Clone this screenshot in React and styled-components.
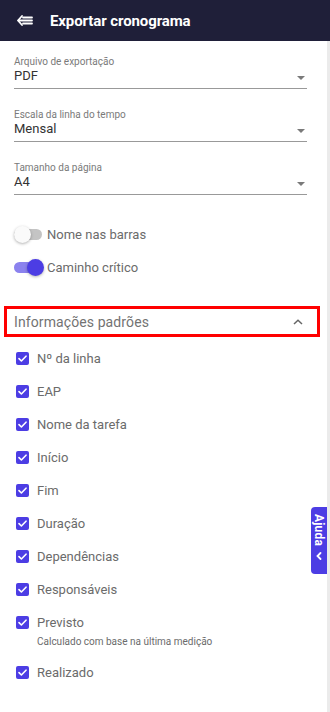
import React from 'react';
import styled, { createGlobalStyle } from 'styled-components';

const GlobalStyle = createGlobalStyle`
  * { box-sizing: border-box; }
  body {
    margin: 0;
    font-family: Roboto, "Noto Sans", sans-serif;
    background: #fff;
  }
`;

const Page = styled.div`
  width: 330px;
  height: 712px;
  display: flex;
  flex-direction: column;
  position: relative;
  overflow: hidden;
`;

const Header = styled.header`
  height: 41px;
  background: #1f1f39;
  display: flex;
  align-items: center;
  padding-left: 17px;
  gap: 17px;
  flex-shrink: 0;
`;

const Title = styled.h1`
  margin: 0;
  color: #fff;
  font-size: 15px;
  font-weight: 700;
  letter-spacing: -0.1px;
`;

const Body = styled.div`
  flex: 1;
  display: flex;
`;

const Content = styled.div`
  flex: 1;
  padding: 15px 0 0 0;
`;

const ScrollTrack = styled.div`
  width: 3px;
  background: #ebebeb;
`;

const Fields = styled.div`
  display: flex;
  flex-direction: column;
  gap: 20px;
  padding: 0 20px 0 14px;
`;

const Field = styled.div`
  display: flex;
  flex-direction: column;
  border-bottom: 1px solid #999;
  padding-bottom: 4px;
`;

const FieldLabel = styled.span`
  font-size: 10px;
  line-height: 12px;
  color: #7a7a7a;
`;

const FieldValue = styled.div`
  display: flex;
  align-items: center;
  justify-content: space-between;
  font-size: 13px;
  line-height: 16px;
  color: #333;
  padding-right: 2px;
`;

const Caret = styled.span`
  width: 0;
  height: 0;
  border-left: 4px solid transparent;
  border-right: 4px solid transparent;
  border-top: 4px solid #7a7a7a;
  margin-top: 3px;
`;

const Switches = styled.div`
  margin-top: 27px;
  padding-left: 14px;
  display: flex;
  flex-direction: column;
  gap: 9px;
`;

const SwitchRow = styled.label`
  height: 24px;
  display: flex;
  align-items: center;
  gap: 5px;
  font-size: 13px;
  color: #6b6b6b;
`;

const Track = styled.span`
  position: relative;
  width: 28px;
  height: 11px;
  border-radius: 6px;
  background: ${p => (p.$on ? '#8b82ee' : '#c4c4c4')};
`;

const Thumb = styled.span`
  position: absolute;
  top: -3px;
  left: ${p => (p.$on ? '13px' : '0px')};
  width: 17px;
  height: 17px;
  border-radius: 50%;
  background: ${p => (p.$on ? '#4c3de4' : '#fafafa')};
  box-shadow: 0 1px 3px rgba(0, 0, 0, 0.3);
`;

const Section = styled.div`
  margin: 27px 7px 0 4px;
  height: 31px;
  border: 3px solid #ff0000;
  display: flex;
  align-items: center;
  justify-content: space-between;
  padding: 0 14px 0 7px;
  font-size: 14px;
  color: #737373;
  letter-spacing: 0.1px;
`;

const Checks = styled.div`
  margin-top: 5px;
  padding-left: 16px;
  display: flex;
  flex-direction: column;
`;

const CheckRow = styled.div`
  height: ${p => (p.$tall ? '50px' : '33px')};
  display: flex;
  align-items: ${p => (p.$tall ? 'flex-start' : 'center')};
  padding-top: ${p => (p.$tall ? '9px' : '0')};
  gap: 8px;
`;

const Box = styled.span`
  width: 13px;
  height: 13px;
  border-radius: 2px;
  background: #4c3de4;
  display: flex;
  align-items: center;
  justify-content: center;
  flex-shrink: 0;
  margin-top: ${p => (p.$tall ? '1px' : '0')};
`;

const CheckText = styled.div`
  display: flex;
  flex-direction: column;
`;

const CheckLabel = styled.span`
  font-size: 13px;
  line-height: 16px;
  color: #6b6b6b;
`;

const Hint = styled.span`
  font-size: 10px;
  line-height: 12px;
  margin-top: 5px;
  color: #6b6b6b;
`;

const HelpTab = styled.div`
  position: absolute;
  right: 3px;
  top: 507px;
  width: 16px;
  height: 67px;
  background: #4c3de4;
  border-radius: 4px 0 0 4px;
  display: flex;
  flex-direction: column;
  align-items: center;
  padding-top: 7px;
  gap: 6px;
  color: #fff;
`;

const HelpText = styled.span`
  writing-mode: vertical-rl;
  font-size: 12px;
  font-weight: 700;
  letter-spacing: 0.2px;
`;

const BackIcon = () => (
  <svg width="16" height="11" viewBox="0 0 16 11" fill="none" stroke="#fff" strokeWidth="1.8" strokeLinecap="round" strokeLinejoin="round">
    <path d="M5 1 L1 5.5 L5 10" />
    <path d="M1.5 5.5 H15" />
    <path d="M6 2.5 H15" />
    <path d="M6 8.5 H15" />
  </svg>
);

const Check = () => (
  <svg width="9" height="7" viewBox="0 0 9 7" fill="none" stroke="#fff" strokeWidth="1.6" strokeLinecap="round" strokeLinejoin="round">
    <path d="M1 3.6 L3.4 6 L8 1.2" />
  </svg>
);

const ChevronUp = () => (
  <svg width="10" height="6" viewBox="0 0 10 6" fill="none" stroke="#666" strokeWidth="1.5">
    <path d="M1 5 L5 1.2 L9 5" />
  </svg>
);

const ChevronLeft = () => (
  <svg width="6" height="8" viewBox="0 0 6 8" fill="none" stroke="#fff" strokeWidth="1.8" strokeLinecap="round">
    <path d="M4.5 1 L1.5 4 L4.5 7" />
  </svg>
);

const fields = [
  ['Arquivo de exportação', 'PDF'],
  ['Escala da linha do tempo', 'Mensal'],
  ['Tamanho da página', 'A4'],
];

const items = [
  'Nº da linha',
  'EAP',
  'Nome da tarefa',
  'Início',
  'Fim',
  'Duração',
  'Dependências',
  'Responsáveis',
];

export default function App() {
  return (
    <Page>
      <GlobalStyle />
      <Header>
        <BackIcon />
        <Title>Exportar cronograma</Title>
      </Header>
      <Body>
        <Content>
          <Fields>
            {fields.map(([label, value]) => (
              <Field key={label}>
                <FieldLabel>{label}</FieldLabel>
                <FieldValue>
                  {value}
                  <Caret />
                </FieldValue>
              </Field>
            ))}
          </Fields>

          <Switches>
            <SwitchRow>
              <Track><Thumb /></Track>
              Nome nas barras
            </SwitchRow>
            <SwitchRow>
              <Track $on><Thumb $on /></Track>
              Caminho crítico
            </SwitchRow>
          </Switches>

          <Section>
            Informações padrões
            <ChevronUp />
          </Section>

          <Checks>
            {items.map(item => (
              <CheckRow key={item}>
                <Box><Check /></Box>
                <CheckLabel>{item}</CheckLabel>
              </CheckRow>
            ))}
            <CheckRow $tall>
              <Box $tall><Check /></Box>
              <CheckText>
                <CheckLabel>Previsto</CheckLabel>
                <Hint>Calculado com base na última medição</Hint>
              </CheckText>
            </CheckRow>
            <CheckRow>
              <Box><Check /></Box>
              <CheckLabel>Realizado</CheckLabel>
            </CheckRow>
          </Checks>
        </Content>
        <ScrollTrack />
      </Body>
      <HelpTab>
        <HelpText>Ajuda</HelpText>
        <ChevronLeft />
      </HelpTab>
    </Page>
  );
}
